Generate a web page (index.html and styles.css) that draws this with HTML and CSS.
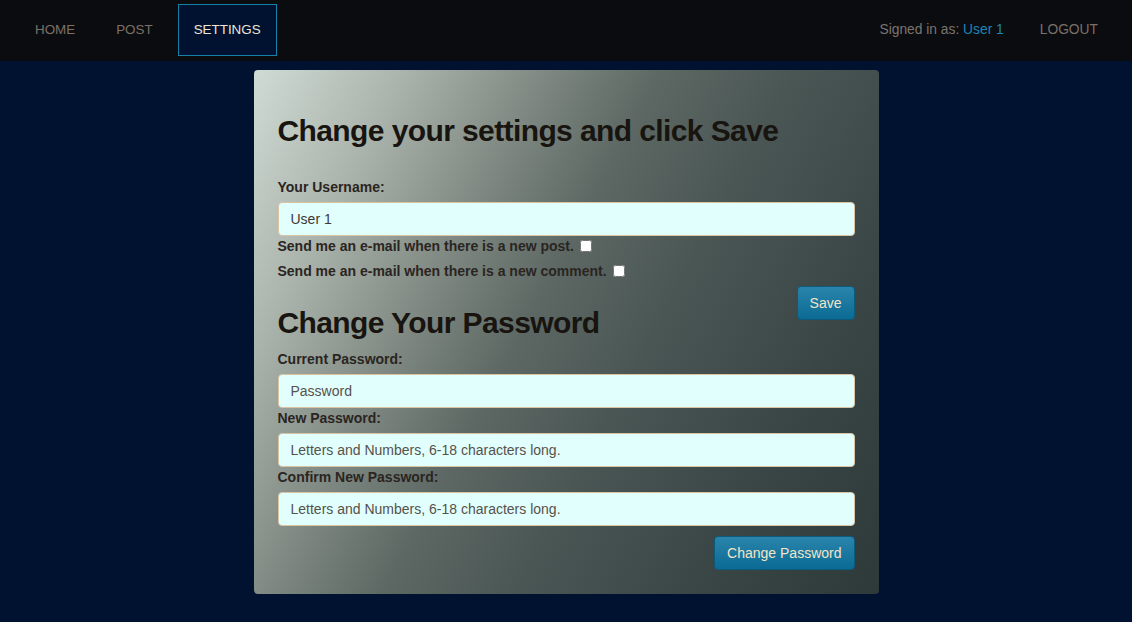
FILE: index.html
```html
<!DOCTYPE html>
<html>
<head>
<meta charset="utf-8">
<title>Settings</title>
<link rel="stylesheet" href="styles.css">
</head>
<body>
<nav class="navbar">
  <ul class="nav-left">
    <li><a class="nav-link" href="#">HOME</a></li>
    <li><a class="nav-link" href="#">POST</a></li>
    <li><a class="nav-link active" href="#">SETTINGS</a></li>
  </ul>
  <div class="nav-right">
    <span class="signed">Signed in as: <a class="user" href="#">User 1</a></span>
    <a class="nav-link logout" href="#">LOGOUT</a>
  </div>
</nav>
<main class="page">
  <section class="card">
    <h2 class="heading first">Change your settings and click Save</h2>
    <form class="settings-form">
      <label class="label">Your Username:</label>
      <input class="input" type="text" value="User 1">
      <label class="label check">Send me an e-mail when there is a new post. <input type="checkbox" class="checkbox"></label>
      <label class="label check">Send me an e-mail when there is a new comment. <input type="checkbox" class="checkbox"></label>
      <button type="button" class="btn btn-right">Save</button>
    </form>
    <h2 class="heading second">Change Your Password</h2>
    <form class="password-form">
      <label class="label">Current Password:</label>
      <input class="input" type="password" placeholder="Password">
      <label class="label">New Password:</label>
      <input class="input" type="password" placeholder="Letters and Numbers, 6-18 characters long.">
      <label class="label">Confirm New Password:</label>
      <input class="input" type="password" placeholder="Letters and Numbers, 6-18 characters long.">
      <div class="actions"><button type="button" class="btn">Change Password</button></div>
    </form>
  </section>
</main>
</body>
</html>
```
FILE: styles.css
```css
* { box-sizing: border-box; }
html, body { margin: 0; padding: 0; }
body {
  background: #001230;
  font-family: "Liberation Sans", Arial, Helvetica, sans-serif;
  font-size: 14px;
  line-height: 20px;
  color: #2a2521;
  height: 622px;
  overflow: hidden;
}
.navbar {
  height: 61px;
  background: #0b0c10;
  display: flex;
  justify-content: space-between;
  align-items: flex-start;
  padding: 4px 18px 0 19px;
}
.nav-left {
  list-style: none;
  margin: 0;
  padding: 0;
  display: flex;
  gap: 9px;
}
.nav-link {
  display: flex;
  align-items: center;
  height: 52px;
  padding: 0 16px 1px;
  color: #7b7167;
  text-decoration: none;
  font-size: 13.4px;
  line-height: 18px;
}
.nav-link.active {
  background: #001230;
  border: 1px solid #1580aa;
  color: #eee5d5;
  padding: 0 15px 1px;
}
.nav-right {
  display: flex;
  align-items: center;
  height: 52px;
  padding-bottom: 1px;
  gap: 20px;
}
.nav-link.logout {
  height: auto;
  padding: 0 16px;
  font-size: 13.8px;
}
.signed { color: #7b746e; font-size: 13.8px; line-height: 18px; }
.user { color: #1b86b6; text-decoration: none; }
.page {
  display: flex;
  justify-content: center;
  padding-top: 9px;
}
.card {
  width: 625px;
  padding: 24px;
  border-radius: 4px;
  background: linear-gradient(118deg, #cfdbd5 0%, #aab3ab 17%, #858e87 30%, #5d6864 45%, #4a5654 60%, #3a4645 80%, #2e3a3a 100%);
  display: flow-root;
}
.heading {
  font-size: 30px;
  line-height: 33px;
  font-weight: bold;
  letter-spacing: -0.6px;
  color: #18140f;
  margin: 20px 0 10px;
}
.heading.first { margin-bottom: 30px; }
.heading.second { margin-top: 25px; }
.label {
  display: block;
  font-weight: bold;
  margin-bottom: 5px;
  line-height: 20px;
}
.input {
  display: block;
  width: 100%;
  height: 34px;
  padding: 6px 12px;
  border: 1px solid #d8c3a2;
  border-radius: 4px;
  background: #e1fffd;
  font-family: inherit;
  font-size: 14px;
  color: #3f3832;
  outline: none;
}
.input::placeholder { color: #57514b; opacity: 1; }
.checkbox {
  width: 12px;
  height: 12px;
  margin: 0 0 0 2px;
  vertical-align: -1px;
}
.btn {
  height: 34px;
  padding: 6px 12px;
  font-family: inherit;
  font-size: 14px;
  line-height: 20px;
  color: #f3e4c6;
  background: linear-gradient(#2a84ab, #0b6b94);
  border: 1px solid #0c5b7c;
  border-radius: 4px;
  cursor: pointer;
}
.btn-right { float: right; }
.actions {
  display: flex;
  justify-content: flex-end;
  margin-top: 10px;
}
```
